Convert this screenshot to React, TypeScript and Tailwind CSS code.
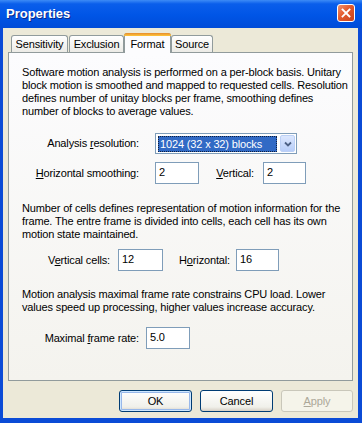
import React from "react";

function Field({ w, v }: { w: string; v: string }) {
  return (
    <div className={`h-[22px] border border-[#7F9DB9] bg-white pl-[3px] pt-[3px] leading-[13px] text-black ${w}`}>
      {v}
    </div>
  );
}

function Tab({ label, w, selected }: { label: string; w: string; selected?: boolean }) {
  if (selected) {
    return (
      <div className={`relative z-10 -mb-px h-[20px] ${w} rounded-t-[3px] border border-b-0 border-[#919B9C] bg-[#FCFCFE] flex flex-col`}>
        <div className="-mx-px -mt-px h-[3px] rounded-t-[3px] bg-[linear-gradient(to_bottom,#E68B2C,#FFC73C)]" />
        <div className="flex-1 flex items-center justify-center leading-[13px] text-black">{label}</div>
      </div>
    );
  }
  return (
    <div className={`h-[17px] ${w} rounded-t-[3px] border border-b-0 border-[#919B9C] bg-[linear-gradient(to_bottom,#FFFFFF,#ECEBE6)] flex items-center justify-center leading-[13px] text-black`}>
      {label}
    </div>
  );
}

export default function App() {
  return (
    <div className="w-[362px] h-[423px] flex flex-col bg-[#0B4BD6] text-[11px] tracking-[-0.15px] [font-family:'Liberation_Sans',Arial,sans-serif] text-black overflow-hidden">
      {/* Title bar */}
      <div className="h-[28px] flex items-center pl-[6px] pr-[6px] bg-[linear-gradient(to_bottom,#3D8BF6_0%,#0A5EEB_14%,#0055E6_55%,#004BD8_100%)]">
        <div className="flex-1 text-white font-bold text-[13px] tracking-normal [text-shadow:1px_1px_0_#0A2A8A]">Properties</div>
        <div className="w-[18px] h-[18px] -mt-[2px] mr-[1px] rounded-[3px] border border-white bg-[linear-gradient(135deg,#F2926E_0%,#E35A2C_45%,#C8421C_100%)] flex items-center justify-center">
          <svg width="10" height="10" viewBox="0 0 10 10">
            <path d="M1.5 1.5 L8.5 8.5 M8.5 1.5 L1.5 8.5" stroke="white" strokeWidth="1.8" strokeLinecap="square" />
          </svg>
        </div>
      </div>

      {/* Body */}
      <div className="flex-1 ml-[3px] mr-[4px] mb-[5px] bg-[#ECE9D8] flex flex-col px-[5px] pt-[5px]">
        {/* Tabs */}
        <div className="h-[19px] flex items-end pl-[3px]">
          <Tab label="Sensitivity" w="w-[57px]" />
          <div className="w-[1px]" />
          <Tab label="Exclusion" w="w-[55px]" />
          <Tab label="Format" w="w-[47px]" selected />
          <Tab label="Source" w="w-[42px]" />
        </div>

        {/* Panel */}
        <div className="h-[329px] border border-[#919B9C] bg-[linear-gradient(to_bottom,#FCFCFE,#F4F3EE)] pt-[13px] leading-[13px]">
          <div className="pl-[13px] whitespace-nowrap">
            <div>Software motion analysis is performed on a per-block basis. Unitary</div>
            <div>block motion is smoothed and mapped to requested cells. Resolution</div>
            <div>defines number of unitay blocks per frame, smoothing defines</div>
            <div>number of blocks to average values.</div>
          </div>

          <div className="mt-[15px] flex items-center">
            <div className="w-[130px] text-right">
              Analysis <u>r</u>esolution:
            </div>
            <div className="ml-[16px] w-[142px] h-[21px] border border-[#7F9DB9] bg-white flex items-stretch pl-[2px] pr-[1px] pt-[2px] pb-[1px] gap-[3px]">
              <div className="flex-1 bg-[#316AC5] text-white border border-dotted border-[#0E1F3F] flex items-center pl-[1px] leading-[13px]">
                1024 (32 x 32) blocks
              </div>
              <div className="w-[15px] -mt-[1px] rounded-[2px] border border-[#BCD0F5] bg-[linear-gradient(to_bottom,#DCE7FE,#B8CEF9)] flex items-center justify-center">
                <svg width="8" height="6" viewBox="0 0 8 6">
                  <path d="M1 1.5 L4 4.5 L7 1.5" stroke="#4D6185" strokeWidth="1.8" fill="none" />
                </svg>
              </div>
            </div>
          </div>

          <div className="mt-[8px] flex items-center">
            <div className="w-[130px] text-right">
              <u>H</u>orizontal smoothing:
            </div>
            <div className="ml-[16px]">
              <Field w="w-[44px]" v="2" />
            </div>
            <div className="w-[55px] text-right">
              <u>V</u>ertical:
            </div>
            <div className="ml-[9px]">
              <Field w="w-[43px]" v="2" />
            </div>
          </div>

          <div className="mt-[18px] pl-[13px] whitespace-nowrap">
            <div>Number of cells defines representation of motion information for the</div>
            <div>frame. The entre frame is divided into cells, each cell has its own</div>
            <div>motion state maintained.</div>
          </div>

          <div className="mt-[8px] flex items-center">
            <div className="w-[101px] text-right">
              V<u>e</u>rtical cells:
            </div>
            <div className="ml-[8px]">
              <Field w="w-[45px]" v="12" />
            </div>
            <div className="w-[67px] text-right">
              H<u>o</u>rizontal:
            </div>
            <div className="ml-[6px]">
              <Field w="w-[43px]" v="16" />
            </div>
          </div>

          <div className="mt-[17px] pl-[13px] whitespace-nowrap">
            <div>Motion analysis maximal frame rate constrains CPU load. Lower</div>
            <div>values speed up processing, higher values increase accuracy.</div>
          </div>

          <div className="mt-[13px] flex items-center">
            <div className="w-[130px] text-right">
              Maximal <u>f</u>rame rate:
            </div>
            <div className="ml-[7px]">
              <Field w="w-[44px]" v="5.0" />
            </div>
          </div>
        </div>

        {/* Buttons */}
        <div className="mt-[9px] flex justify-end gap-[8px] pr-[0px]">
          <div className="w-[73px] h-[22px] rounded-[3px] border border-[#003C74] bg-[linear-gradient(to_bottom,#FFFFFF,#F0F0EA_80%,#D6D0C5)] shadow-[inset_0_0_0_1px_#CEE7FF,inset_0_0_0_2px_#98B8EA] flex items-center justify-center leading-[13px]">
            OK
          </div>
          <div className="w-[73px] h-[22px] rounded-[3px] border border-[#003C74] bg-[linear-gradient(to_bottom,#FFFFFF,#F0F0EA_80%,#D6D0C5)] flex items-center justify-center leading-[13px]">
            Cancel
          </div>
          <div className="w-[72px] h-[22px] rounded-[3px] border border-[#C9C7BA] bg-[#F5F4EA] text-[#ACA899] flex items-center justify-center leading-[13px]">
            <span><u>A</u>pply</span>
          </div>
        </div>
      </div>
    </div>
  );
}
